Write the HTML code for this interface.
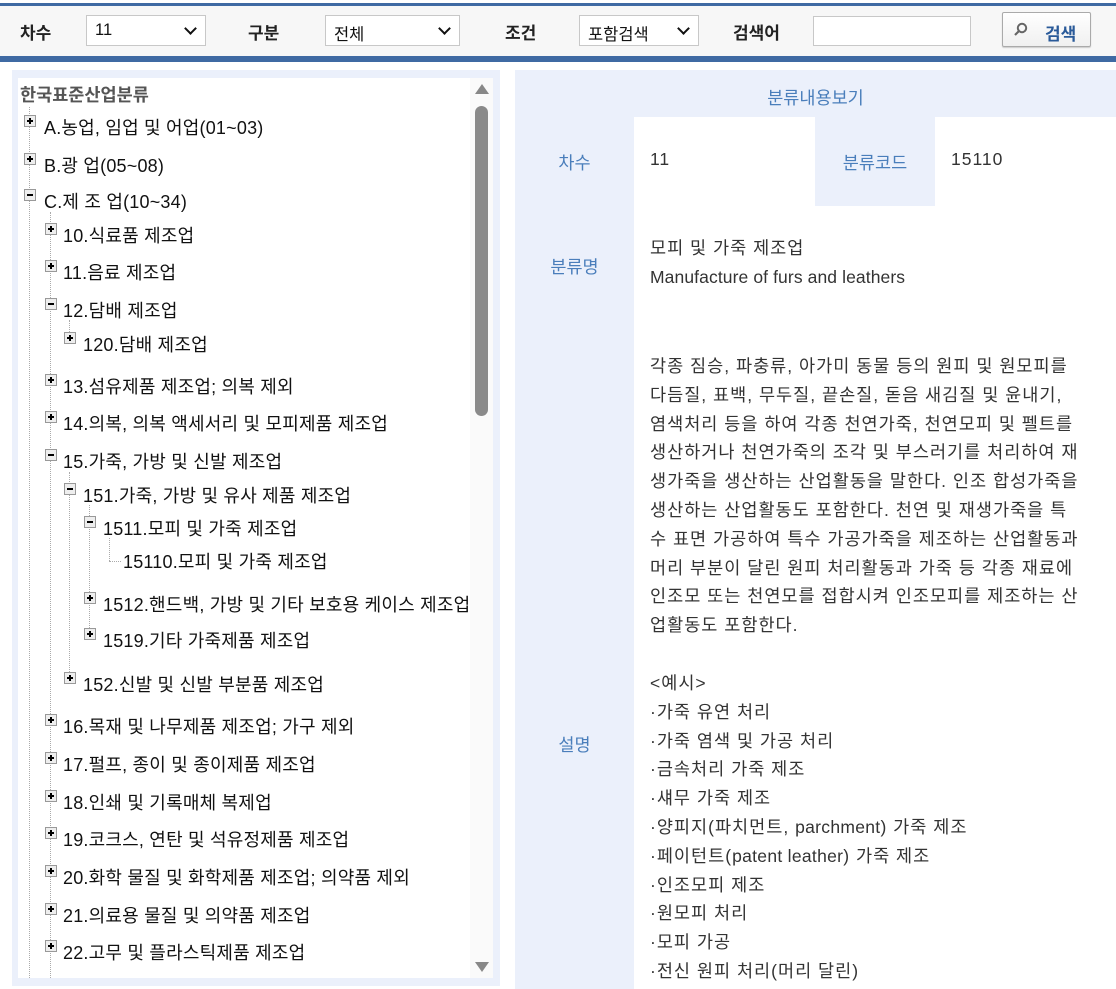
<!DOCTYPE html>
<html><head><meta charset="utf-8"><style>
*{margin:0;padding:0;box-sizing:border-box}
body{width:1116px;height:989px;overflow:hidden;background:#fff;font-family:"Liberation Sans","Noto Sans CJK KR",sans-serif;position:relative}
.abs{position:absolute}
.top{left:0;top:3px;width:1116px;height:59px;background:#f7f7f7;border-top:3px solid #3f6aa3;border-bottom:6px solid #3f6aa3}
.lbl{font-size:17px;font-weight:bold;color:#222;top:19px}
.sel{top:15px;height:31px;border:1px solid #c8c8c8;background:#fff;font-size:16.5px;color:#111;padding:5px 0 0 8px}
.sel:after{content:"";position:absolute;right:10px;top:8px;width:7px;height:7px;border-right:2px solid #111;border-bottom:2px solid #111;transform:rotate(45deg)}
.tree{font-size:18px;letter-spacing:0.2px;color:#111;white-space:nowrap}
.ic{width:12px;height:12px;border:1px solid #999;background:#eee}
.ic:before{content:"";position:absolute;left:2px;top:4px;width:6px;height:2px;background:#000}
.ic.p:after{content:"";position:absolute;left:4px;top:2px;width:2px;height:6px;background:#000}
.vl{border-left:1px dotted #aaa}
.hl{border-top:1px dotted #aaa;height:0}
.rt{font-size:17.5px;letter-spacing:1px;color:#333;line-height:28.8px;white-space:nowrap}
.bl{color:#4a7ebb;font-size:17.5px}
</style></head><body>
<div class="abs top"></div>
<div class="abs lbl" style="left:20px">차수</div>
<div class="abs sel" style="left:86px;width:120px">11</div>
<div class="abs lbl" style="left:248px">구분</div>
<div class="abs sel" style="left:325px;width:135px">전체</div>
<div class="abs lbl" style="left:505px">조건</div>
<div class="abs sel" style="left:579px;width:120px">포함검색</div>
<div class="abs lbl" style="left:733px">검색어</div>
<div class="abs" style="left:813px;top:16px;width:158px;height:30px;border:1px solid #c8c8c8;background:#fff"></div>
<div class="abs" style="left:1002px;top:12px;width:89px;height:35px;border:1px solid #aaa;border-radius:2px;background:linear-gradient(#fff,#f0f0f0);box-shadow:0 1px 1px #ccc"></div>
<svg class="abs" style="left:1013px;top:22px" width="16" height="16"><circle cx="9" cy="6" r="4.2" fill="none" stroke="#666" stroke-width="2"/><line x1="6" y1="9" x2="2" y2="13" stroke="#666" stroke-width="2.2"/></svg>
<div class="abs" style="left:1045px;top:20px;font-size:17px;font-weight:bold;color:#2a5a99">검색</div>

<div class="abs" style="left:12px;top:70px;width:488px;height:916px;background:#ebf0fb"></div>
<div class="abs" style="left:18px;top:78px;width:475px;height:900px;background:#fff"></div>
<div class="abs" style="left:470px;top:78px;width:23px;height:900px;background:#fafafa"></div>
<div class="abs" style="left:475px;top:84px;width:0;height:0;border-left:7px solid transparent;border-right:7px solid transparent;border-bottom:10px solid #888"></div>
<div class="abs" style="left:475px;top:106px;width:13px;height:310px;border-radius:7px;background:#8a8a8a"></div>
<div class="abs" style="left:475px;top:962px;width:0;height:0;border-left:7px solid transparent;border-right:7px solid transparent;border-top:10px solid #888"></div>
<div class="abs" style="left:20px;top:82px;font-size:17.5px;font-weight:bold;color:#555">한국표준산업분류</div>

<div class="abs vl" style="left:29px;top:107px;height:871px"></div>
<div class="abs vl" style="left:50px;top:212px;height:766px"></div>
<div class="abs vl" style="left:69px;top:320px;height:20px"></div>
<div class="abs vl" style="left:69px;top:472px;height:212px"></div>
<div class="abs vl" style="left:89px;top:505px;height:135px"></div>
<div class="abs vl" style="left:109px;top:538px;height:23px"></div>
<div class="abs hl" style="left:109px;top:561px;width:12px"></div>

<div class="tree">
<div class="abs ic p" style="left:24px;top:115px"></div><div class="abs" style="left:44px;top:114px">A.농업, 임업 및 어업(01~03)</div>
<div class="abs ic p" style="left:24px;top:153px"></div><div class="abs" style="left:44px;top:152px">B.광 업(05~08)</div>
<div class="abs ic" style="left:24px;top:189px"></div><div class="abs" style="left:44px;top:188px">C.제 조 업(10~34)</div>
<div class="abs ic p" style="left:45px;top:223px"></div><div class="abs" style="left:63px;top:222px">10.식료품 제조업</div>
<div class="abs ic p" style="left:45px;top:260px"></div><div class="abs" style="left:63px;top:259px">11.음료 제조업</div>
<div class="abs ic" style="left:45px;top:298px"></div><div class="abs" style="left:63px;top:297px">12.담배 제조업</div>
<div class="abs ic p" style="left:64px;top:332px"></div><div class="abs" style="left:83px;top:331px">120.담배 제조업</div>
<div class="abs ic p" style="left:45px;top:374px"></div><div class="abs" style="left:63px;top:373px">13.섬유제품 제조업; 의복 제외</div>
<div class="abs ic p" style="left:45px;top:411px"></div><div class="abs" style="left:63px;top:410px">14.의복, 의복 액세서리 및 모피제품 제조업</div>
<div class="abs ic" style="left:45px;top:449px"></div><div class="abs" style="left:63px;top:448px">15.가죽, 가방 및 신발 제조업</div>
<div class="abs ic" style="left:64px;top:483px"></div><div class="abs" style="left:83px;top:482px">151.가죽, 가방 및 유사 제품 제조업</div>
<div class="abs ic" style="left:84px;top:516px"></div><div class="abs" style="left:103px;top:515px">1511.모피 및 가죽 제조업</div>
<div class="abs" style="left:123px;top:548px">15110.모피 및 가죽 제조업</div>
<div class="abs ic p" style="left:84px;top:592px"></div><div class="abs" style="left:103px;top:591px">1512.핸드백, 가방 및 기타 보호용 케이스 제조업</div>
<div class="abs ic p" style="left:84px;top:628px"></div><div class="abs" style="left:103px;top:627px">1519.기타 가죽제품 제조업</div>
<div class="abs ic p" style="left:64px;top:672px"></div><div class="abs" style="left:83px;top:671px">152.신발 및 신발 부분품 제조업</div>
<div class="abs ic p" style="left:45px;top:714px"></div><div class="abs" style="left:63px;top:713px">16.목재 및 나무제품 제조업; 가구 제외</div>
<div class="abs ic p" style="left:45px;top:752px"></div><div class="abs" style="left:63px;top:751px">17.펄프, 종이 및 종이제품 제조업</div>
<div class="abs ic p" style="left:45px;top:790px"></div><div class="abs" style="left:63px;top:789px">18.인쇄 및 기록매체 복제업</div>
<div class="abs ic p" style="left:45px;top:827px"></div><div class="abs" style="left:63px;top:826px">19.코크스, 연탄 및 석유정제품 제조업</div>
<div class="abs ic p" style="left:45px;top:865px"></div><div class="abs" style="left:63px;top:864px">20.화학 물질 및 화학제품 제조업; 의약품 제외</div>
<div class="abs ic p" style="left:45px;top:903px"></div><div class="abs" style="left:63px;top:902px">21.의료용 물질 및 의약품 제조업</div>
<div class="abs ic p" style="left:45px;top:940px"></div><div class="abs" style="left:63px;top:939px">22.고무 및 플라스틱제품 제조업</div>
</div>

<div class="abs" style="left:515px;top:70px;width:601px;height:919px;background:#ebf0fb"></div>
<div class="abs" style="left:634px;top:117px;width:482px;height:872px;background:#fff"></div>
<div class="abs" style="left:815px;top:117px;width:120px;height:89px;background:#ebf0fb"></div>
<div class="abs bl" style="left:515px;top:85px;width:601px;text-align:center">분류내용보기</div>
<div class="abs bl" style="left:515px;top:150px;width:119px;text-align:center">차수</div>
<div class="abs bl" style="left:815px;top:150px;width:120px;text-align:center">분류코드</div>
<div class="abs bl" style="left:515px;top:254px;width:119px;text-align:center">분류명</div>
<div class="abs bl" style="left:515px;top:732px;width:119px;text-align:center">설명</div>
<div class="abs rt" style="left:650px;top:145px">11</div>
<div class="abs rt" style="left:951px;top:145px">15110</div>
<div class="abs rt" style="left:650px;top:234px">모피 및 가죽 제조업<br><span style="letter-spacing:0.1px">Manufacture of furs and leathers</span></div>
<div class="abs rt" style="left:650px;top:352px">각종 짐승, 파충류, 아가미 동물 등의 원피 및 원모피를<br>다듬질, 표백, 무두질, 끝손질, 돋음 새김질 및 윤내기,<br>염색처리 등을 하여 각종 천연가죽, 천연모피 및 펠트를<br>생산하거나 천연가죽의 조각 및 부스러기를 처리하여 재<br>생가죽을 생산하는 산업활동을 말한다. 인조 합성가죽을<br>생산하는 산업활동도 포함한다. 천연 및 재생가죽을 특<br>수 표면 가공하여 특수 가공가죽을 제조하는 산업활동과<br>머리 부분이 달린 원피 처리활동과 가죽 등 각종 재료에<br>인조모 또는 천연모를 접합시켜 인조모피를 제조하는 산<br>업활동도 포함한다.</div>
<div class="abs rt" style="left:650px;top:669px">&lt;예시&gt;<br>·가죽 유연 처리<br>·가죽 염색 및 가공 처리<br>·금속처리 가죽 제조<br>·섀무 가죽 제조<br>·양피지(파치먼트, <span style="letter-spacing:0.3px">parchment</span>) 가죽 제조<br>·페이턴트(<span style="letter-spacing:0.3px">patent leather</span>) 가죽 제조<br>·인조모피 제조<br>·원모피 처리<br>·모피 가공<br>·전신 원피 처리(머리 달린)</div>
</body></html>
